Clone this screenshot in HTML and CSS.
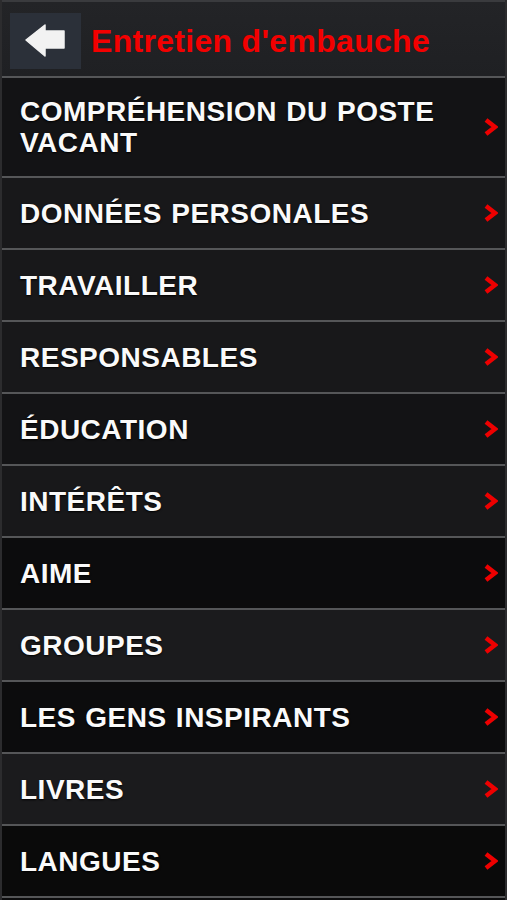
FILE: index.html
```html
<!DOCTYPE html>
<html lang="fr">
<head>
    <meta charset="UTF-8">
    <meta name="viewport" content="width=device-width, initial-scale=1.0">
    <title>Entretien d'embauche</title>
    <link rel="stylesheet" href="styles.css">
</head>
<body>
    <div class="screen">
        <header class="topbar">
            <button class="back-btn" aria-label="Retour">
                <svg width="71" height="56" viewBox="0 0 71 56">
                    <polygon points="16,27 35,12 35,18 54,18 54,35 35,35 35,43" fill="#f2f2f2" stroke="#f2f2f2" stroke-width="1.5" stroke-linejoin="round"/>
                </svg>
            </button>
            <h1 class="title">Entretien d'embauche</h1>
        </header>

        <ul class="menu">
            <li class="item first shade-a"><span>COMPRÉHENSION DU POSTE VACANT</span><svg class="chev" viewBox="0 0 15 20"><polyline points="3,3 12,10 3,17"/></svg></li>
            <li class="item shade-b"><span>DONNÉES PERSONALES</span><svg class="chev" viewBox="0 0 15 20"><polyline points="3,3 12,10 3,17"/></svg></li>
            <li class="item shade-b"><span>TRAVAILLER</span><svg class="chev" viewBox="0 0 15 20"><polyline points="3,3 12,10 3,17"/></svg></li>
            <li class="item shade-b"><span>RESPONSABLES</span><svg class="chev" viewBox="0 0 15 20"><polyline points="3,3 12,10 3,17"/></svg></li>
            <li class="item shade-a"><span>ÉDUCATION</span><svg class="chev" viewBox="0 0 15 20"><polyline points="3,3 12,10 3,17"/></svg></li>
            <li class="item shade-b"><span>INTÉRÊTS</span><svg class="chev" viewBox="0 0 15 20"><polyline points="3,3 12,10 3,17"/></svg></li>
            <li class="item shade-c"><span>AIME</span><svg class="chev" viewBox="0 0 15 20"><polyline points="3,3 12,10 3,17"/></svg></li>
            <li class="item shade-d"><span>GROUPES</span><svg class="chev" viewBox="0 0 15 20"><polyline points="3,3 12,10 3,17"/></svg></li>
            <li class="item shade-c"><span>LES GENS INSPIRANTS</span><svg class="chev" viewBox="0 0 15 20"><polyline points="3,3 12,10 3,17"/></svg></li>
            <li class="item shade-d"><span>LIVRES</span><svg class="chev" viewBox="0 0 15 20"><polyline points="3,3 12,10 3,17"/></svg></li>
            <li class="item shade-e"><span>LANGUES</span><svg class="chev" viewBox="0 0 15 20"><polyline points="3,3 12,10 3,17"/></svg></li>
        </ul>
    </div>
</body>
</html>
```

FILE: styles.css
```css
* {
    box-sizing: border-box;
    margin: 0;
    padding: 0;
}
body {
    font-family: 'Liberation Sans', Arial, sans-serif;
    background: #0c0c0d;
    width: 507px;
    height: 900px;
    overflow: hidden;
}
.screen {
    border-left: 2px solid #2c2c2e;
    border-right: 2px solid #2c2c2e;
    min-height: 900px;
}
.topbar {
    height: 78px;
    display: flex;
    align-items: center;
    gap: 10px;
    padding: 4px 0 0 8px;
    background: linear-gradient(180deg, #232427 0%, #1f2023 100%);
    border-top: 2px solid #3a3b3e;
    border-bottom: 2px solid #555658;
}
.back-btn {
    width: 71px;
    height: 56px;
    background-color: #2b3039;
    border: none;
    display: flex;
    cursor: pointer;
}
.title {
    color: #f30000;
    font-size: 32px;
    font-weight: bold;
    letter-spacing: 0.3px;
}
.menu {
    list-style: none;
}
.item {
    height: 72px;
    display: flex;
    align-items: center;
    justify-content: space-between;
    padding: 0 7px 0 18px;
    border-bottom: 2px solid #555658;
    color: #fafafa;
    font-size: 28px;
    font-weight: bold;
    line-height: 31px;
    letter-spacing: 0.5px;
    word-spacing: 1px;
    text-shadow: 0 1px 2px #000;
    cursor: pointer;
}
.item span {
    max-width: 440px;
}
.item.first {
    height: 100px;
}
.shade-a { background-color: #131315; }
.shade-b { background-color: #18181a; }
.shade-c { background-color: #0c0c0d; }
.shade-d { background-color: #1b1b1d; }
.shade-e { background-color: #0a0a0a; }
.chev {
    width: 15px;
    height: 20px;
    flex-shrink: 0;
}
.chev polyline {
    fill: none;
    stroke: #ee0000;
    stroke-width: 4.5;
}
```
